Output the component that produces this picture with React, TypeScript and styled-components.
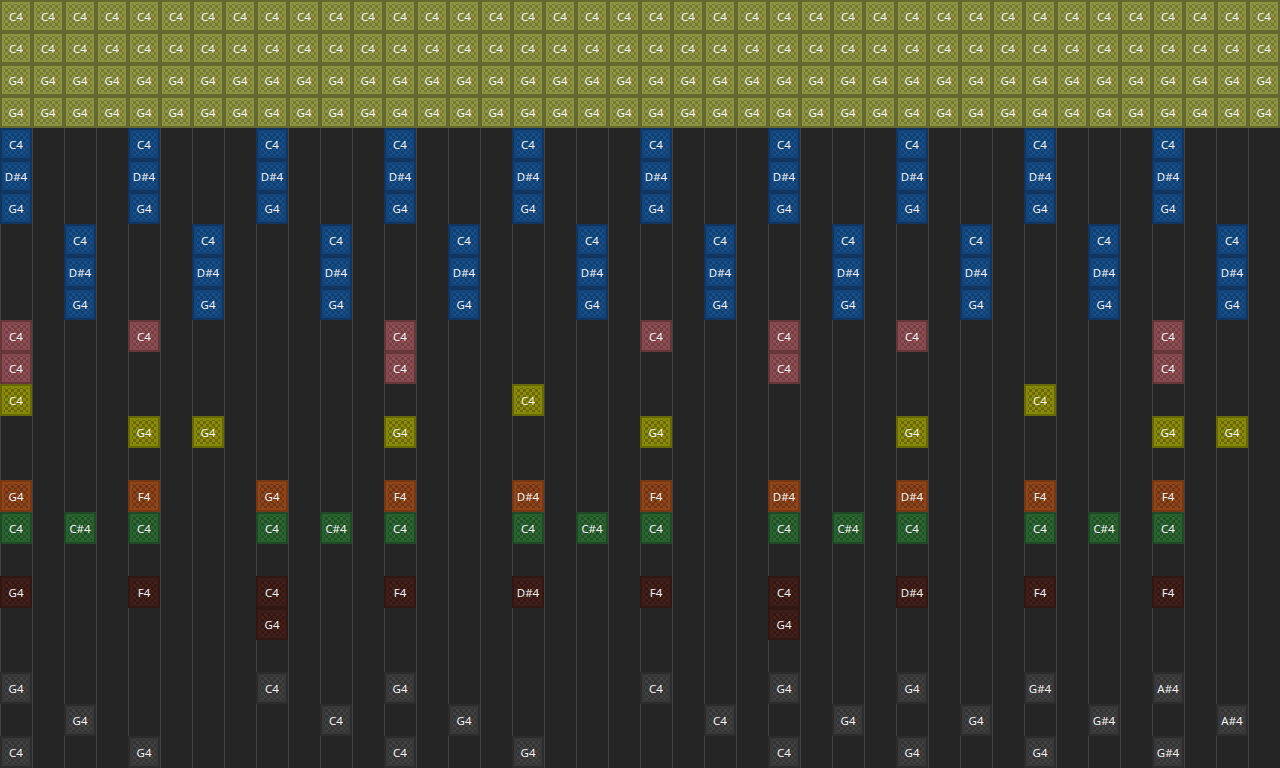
import styled, { createGlobalStyle } from "styled-components";

type Tone = {
  edge: string;
  rim: string;
  light: string;
  dark: string;
};

const tones: Record<string, Tone> = {
  olive: { edge: "#646930", rim: "#8c923f", light: "#8f9543", dark: "#747a37" },
  blue: { edge: "#0f3560", rim: "#134477", light: "#174f8b", dark: "#113f6e" },
  red: { edge: "#663638", rim: "#84494d", light: "#8e5054", dark: "#743e43" },
  yellow: { edge: "#686805", rim: "#868607", light: "#8c8c08", dark: "#686805" },
  orange: { edge: "#773815", rim: "#904519", light: "#8f4519", dark: "#6f3413" },
  green: { edge: "#1f4a26", rim: "#295e2f", light: "#2d6833", dark: "#214f27" },
  brown: { edge: "#311611", rim: "#3d1d17", light: "#44201a", dark: "#321712" },
  gray: { edge: "#2c2c2d", rim: "#38383a", light: "#414142", dark: "#343435" },
};

type Note = { col: number; pitch: string };

// spread "col:pitch" pairs, one string per row of the roll
const parse = (s: string): Note[] =>
  s.split(" ").map((pair) => {
    const [col, pitch] = pair.split(":");
    return { col: Number(col), pitch };
  });

const every = (step: number, offset: number, pitch: string): Note[] => {
  const notes: Note[] = [];
  for (let col = offset; col < 40; col += step) {
    notes.push({ col, pitch });
  }
  return notes;
};

const rows: { tone: string; notes: Note[] }[] = [
  { tone: "olive", notes: every(1, 0, "C4") },
  { tone: "olive", notes: every(1, 0, "C4") },
  { tone: "olive", notes: every(1, 0, "G4") },
  { tone: "olive", notes: every(1, 0, "G4") },
  { tone: "blue", notes: every(4, 0, "C4") },
  { tone: "blue", notes: every(4, 0, "D#4") },
  { tone: "blue", notes: every(4, 0, "G4") },
  { tone: "blue", notes: every(4, 2, "C4") },
  { tone: "blue", notes: every(4, 2, "D#4") },
  { tone: "blue", notes: every(4, 2, "G4") },
  { tone: "red", notes: parse("0:C4 4:C4 12:C4 20:C4 24:C4 28:C4 36:C4") },
  { tone: "red", notes: parse("0:C4 12:C4 24:C4 36:C4") },
  { tone: "yellow", notes: parse("0:C4 16:C4 32:C4") },
  { tone: "yellow", notes: parse("4:G4 6:G4 12:G4 20:G4 28:G4 36:G4 38:G4") },
  { tone: "gray", notes: [] },
  {
    tone: "orange",
    notes: parse("0:G4 4:F4 8:G4 12:F4 16:D#4 20:F4 24:D#4 28:D#4 32:F4 36:F4"),
  },
  {
    tone: "green",
    notes: parse(
      "0:C4 2:C#4 4:C4 8:C4 10:C#4 12:C4 16:C4 18:C#4 20:C4 24:C4 26:C#4 28:C4 32:C4 34:C#4 36:C4",
    ),
  },
  { tone: "gray", notes: [] },
  {
    tone: "brown",
    notes: parse("0:G4 4:F4 8:C4 12:F4 16:D#4 20:F4 24:C4 28:D#4 32:F4 36:F4"),
  },
  { tone: "brown", notes: parse("8:G4 24:G4") },
  { tone: "gray", notes: [] },
  {
    tone: "gray",
    notes: parse("0:G4 8:C4 12:G4 20:C4 24:G4 28:G4 32:G#4 36:A#4"),
  },
  {
    tone: "gray",
    notes: parse("2:G4 10:C4 14:G4 22:C4 26:G4 30:G4 34:G#4 38:A#4"),
  },
  {
    tone: "gray",
    notes: parse("0:C4 4:G4 12:C4 16:G4 24:C4 28:G4 32:G4 36:G#4"),
  },
];

const GlobalStyle = createGlobalStyle`
  html, body {
    margin: 0;
    padding: 0;
    background: #252526;
    overflow: hidden;
  }
`;

const Roll = styled.div`
  display: grid;
  grid-template-rows: repeat(24, 32px);
  width: 1280px;
  height: 768px;
  overflow: hidden;
  background: #252526;
  font: 500 11.5px "Open Sans", "Liberation Sans", sans-serif;
`;

const RollRow = styled.div`
  display: grid;
  grid-template-columns: repeat(40, 32px);
`;

const Cell = styled.div`
  border-left: 1px solid #444446;
  position: relative;
`;

const NoteBlock = styled.div<{ $tone: Tone }>`
  position: absolute;
  top: 0;
  left: -1px;
  box-sizing: border-box;
  width: 32px;
  height: 32px;
  display: flex;
  align-items: center;
  justify-content: center;
  border: 2px solid ${({ $tone }) => $tone.edge};
  box-shadow: inset 0 0 0 2px ${({ $tone }) => $tone.rim};
  background: repeating-conic-gradient(
      ${({ $tone }) => $tone.light} 0 25%,
      ${({ $tone }) => $tone.dark} 0 50%
    )
    0 0 / 6px 6px;
  color: #fafafa;
`;

const App = () => {
  return (
    <Roll>
      <GlobalStyle />
      {rows.map((row, rowIndex) => (
        <RollRow key={rowIndex}>
          {Array.from({ length: 40 }, (_, col) => {
            const note = row.notes.find((n) => n.col === col);
            return (
              <Cell key={col}>
                {note ? (
                  <NoteBlock $tone={tones[row.tone]}>{note.pitch}</NoteBlock>
                ) : null}
              </Cell>
            );
          })}
        </RollRow>
      ))}
    </Roll>
  );
};

export default App;
